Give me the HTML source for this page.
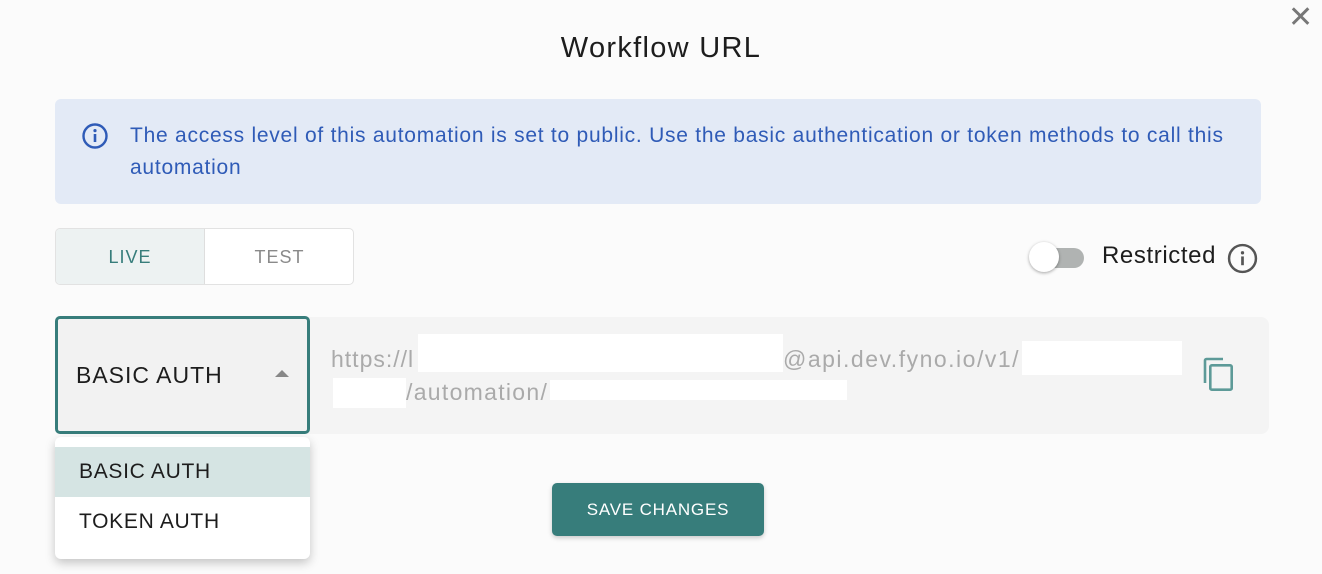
<!DOCTYPE html>
<html><head><style>
*{margin:0;padding:0;box-sizing:border-box}
body{width:1322px;height:574px;background:#fbfbfb;font-family:"Liberation Sans",sans-serif;position:relative;overflow:hidden}
.a{position:absolute}
</style></head><body>
<div class="a" style="left:0;width:1322px;top:6px;"></div>
<div class="a" style="left:1288px;top:6px;font-size:30px;color:#777;line-height:24px">&#x2715;</div>
<div class="a" style="left:0;width:1322px;top:32px;text-align:center;font-size:29px;color:#1d1d1d;letter-spacing:1.3px">Workflow URL</div>
<div class="a" style="left:55px;top:99px;width:1206px;height:105px;background:#e3eaf6;border-radius:6px"></div>
<svg class="a" style="left:81px;top:122px" width="28" height="28" viewBox="0 0 28 28"><circle cx="14" cy="14" r="11.5" fill="none" stroke="#2f5bb7" stroke-width="2.4"/><rect x="12.7" y="12" width="2.6" height="8" fill="#2f5bb7"/><circle cx="14" cy="8.6" r="1.6" fill="#2f5bb7"/></svg>
<div class="a" style="left:130px;top:120px;width:1120px;font-size:21px;line-height:32px;color:#2f5bb7;letter-spacing:0.75px">The access level of this automation is set to public. Use the basic authentication or token methods to call this automation</div>
<div class="a" style="left:55px;top:228px;width:299px;height:57px;border:1px solid #e2e2e2;border-radius:5px;background:#fff;overflow:hidden">
<div class="a" style="left:0;top:0;width:149px;height:55px;background:#edf2f2;border-right:1px solid #dedede;color:#377d7b;font-size:18px;text-align:center;line-height:57px;letter-spacing:1px">LIVE</div>
<div class="a" style="left:149px;top:0;width:149px;height:55px;color:#8a8a8a;font-size:18px;text-align:center;line-height:57px;letter-spacing:1px">TEST</div></div>
<div class="a" style="left:1030px;top:248px;width:54px;height:20px;border-radius:10px;background:#b0b3b2"></div>
<div class="a" style="left:1029px;top:242px;width:30px;height:30px;border-radius:50%;background:#fff;box-shadow:0 1px 3px rgba(0,0,0,.35)"></div>
<div class="a" style="left:1102px;top:242px;font-size:24px;color:#1d1d1d;letter-spacing:0.6px">Restricted</div>
<svg class="a" style="left:1227px;top:243px" width="31" height="31" viewBox="0 0 30 30"><circle cx="15" cy="15" r="13" fill="none" stroke="#555" stroke-width="2.4"/><rect x="13.7" y="13" width="2.6" height="8.5" fill="#555"/><circle cx="15" cy="9.5" r="1.6" fill="#555"/></svg>
<div class="a" style="left:300px;top:317px;width:969px;height:117px;background:#f4f4f4;border-radius:8px"></div>
<div class="a" style="left:55px;top:316px;width:255px;height:118px;background:#f2f2f2;border:3px solid #377d7b;border-radius:5px"></div>
<div class="a" style="left:76px;top:362px;font-size:23px;color:#1d1d1d;letter-spacing:1px">BASIC AUTH</div>
<div class="a" style="left:275px;top:370px;width:0;height:0;border-left:7px solid transparent;border-right:7px solid transparent;border-bottom:7px solid #888"></div>
<div class="a" style="left:331px;top:343px;font-size:23px;color:#aaa;line-height:33px;white-space:nowrap;letter-spacing:1px">https://l</div>
<div class="a" style="left:783px;top:343px;font-size:23px;color:#aaa;line-height:33px;white-space:nowrap;letter-spacing:1.5px">@api.dev.fyno.io/v1/</div>
<div class="a" style="left:406px;top:376px;font-size:23px;color:#aaa;line-height:33px;letter-spacing:1.3px">/automation/</div>
<div class="a" style="left:418px;top:334px;width:365px;height:38px;background:#fff"></div>
<div class="a" style="left:1022px;top:341px;width:160px;height:34px;background:#fff"></div>
<div class="a" style="left:333px;top:378px;width:73px;height:30px;background:#fff"></div>
<div class="a" style="left:550px;top:380px;width:297px;height:20px;background:#fff"></div>
<svg class="a" style="left:1203px;top:357px" width="32" height="36" viewBox="0 0 32 36"><path d="M2 26V3.5C2 2.7 2.7 2 3.5 2H20" fill="none" stroke="#5d9a98" stroke-width="2.6"/><rect x="7.3" y="8.3" width="21.4" height="24.4" rx="1.5" fill="none" stroke="#5d9a98" stroke-width="2.6"/></svg>
<div class="a" style="left:55px;top:437px;width:255px;height:122px;background:#fff;border-radius:6px;box-shadow:0 4px 10px rgba(0,0,0,.22)"></div>
<div class="a" style="left:55px;top:447px;width:255px;height:50px;background:#d5e4e3"></div>
<div class="a" style="left:79px;top:460px;font-size:21px;color:#1d1d1d;letter-spacing:0.7px">BASIC AUTH</div>
<div class="a" style="left:79px;top:510px;font-size:21px;color:#1d1d1d;letter-spacing:0.7px">TOKEN AUTH</div>
<div class="a" style="left:552px;top:483px;width:212px;height:53px;background:#377d7b;border-radius:5px;box-shadow:0 2px 5px rgba(0,0,0,.2);color:#fff;font-size:17px;text-align:center;line-height:53px;letter-spacing:0.8px">SAVE CHANGES</div>
</body></html>
